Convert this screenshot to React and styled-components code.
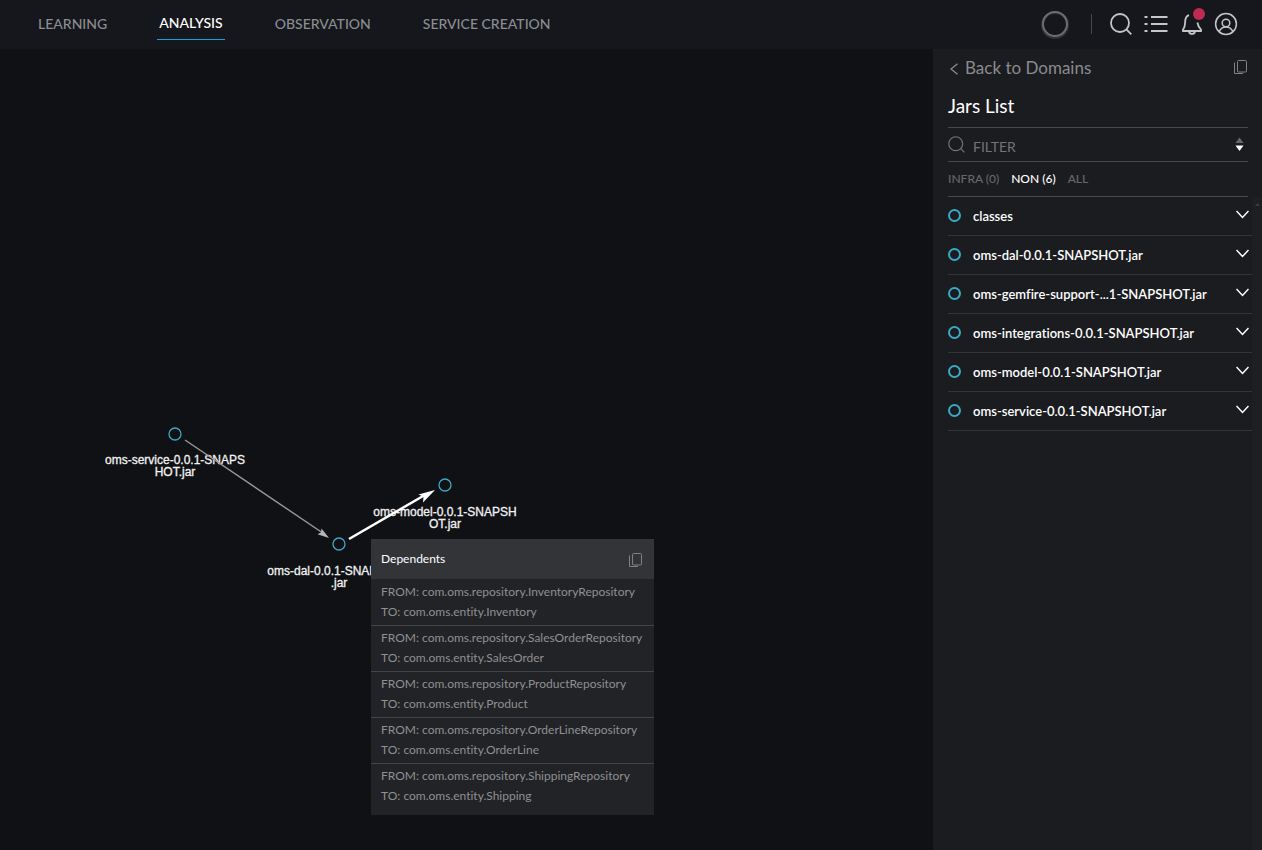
import { useState } from "react";
import styled, { createGlobalStyle } from "styled-components";

const GlobalStyle = createGlobalStyle`
  * {
    box-sizing: border-box;
  }
  body {
    margin: 0;
    background: #101115;
    color: #ffffff;
    font-family: Lato, "Open Sans", sans-serif;
    font-size: 14px;
    font-variant-ligatures: none;
  }
  button {
    padding: 0;
    border: none;
    background: none;
    color: inherit;
    font: inherit;
    cursor: pointer;
  }
  svg {
    display: block;
  }
  h1, h2, ul, p {
    margin: 0;
    padding: 0;
  }
`;

const Page = styled.div`
  display: flex;
  flex-direction: column;
  min-height: 100vh;
`;

const Header = styled.header`
  display: flex;
  justify-content: space-between;
  align-items: center;
  height: 49px;
  padding: 0 24px 2px 36px;
  background: #15171c;
`;

const Nav = styled.nav`
  display: flex;
  gap: 48px;
`;

const NavLink = styled.a`
  padding: 0 2px;
  height: 32px;
  line-height: ${(props) => (props.$active ? "30px" : "32px")};
  font-size: 14px;
  font-weight: 500;
  text-decoration: none;
  color: ${(props) => (props.$active ? "#ffffff" : "#8b8d91")};
  border-bottom: 1px solid ${(props) => (props.$active ? "#12a5cf" : "transparent")};
`;

const Tools = styled.div`
  display: flex;
  align-items: center;
  color: #c4c5c7;
`;

const Divider = styled.span`
  width: 1px;
  height: 20px;
  margin: 0 18px 0 21px;
  background: #45474c;
`;

const ToolButtons = styled.div`
  display: flex;
  gap: 12px;
`;

const Main = styled.main`
  display: flex;
  flex: 1;
`;

const Canvas = styled.section`
  position: relative;
  flex: 1;
  min-width: 0;
  overflow: hidden;
`;

const Graph = styled.svg`
  position: absolute;
  top: 0;
  left: 0;
  width: 100%;
  height: 100%;
  font-family: "Liberation Sans", Arial, sans-serif;
  font-size: 12px;
`;

const Popup = styled.div`
  position: absolute;
  top: 490px;
  left: 371px;
  width: 283px;
  padding-bottom: 6px;
  background: #222326;
`;

const PopupHeader = styled.div`
  display: flex;
  justify-content: space-between;
  align-items: center;
  height: 40px;
  margin-bottom: 1px;
  padding: 0 12px 0 10px;
  background: #333438;
  color: #808185;
  h2 {
    padding-bottom: 2px;
    font-size: 12px;
    font-weight: 400;
    color: #ffffff;
  }
  button {
    padding-top: 2px;
  }
`;

const Dependent = styled.li`
  padding: 2px 10px 3px;
  border-bottom: 1px solid #434448;
  list-style: none;
  font-size: 12px;
  line-height: 20px;
  white-space: nowrap;
  color: #8f9092;
  &:last-child {
    border-bottom: none;
  }
`;

const Sidebar = styled.aside`
  display: flex;
  flex-direction: column;
  width: 329px;
  background: #1b1c1f;
`;

const SidebarTop = styled.div`
  padding: 0 14px 0 15px;
`;

const BackRow = styled.div`
  display: flex;
  justify-content: space-between;
  align-items: center;
  height: 38px;
  padding: 0 1px 2px 0;
  color: #808184;
`;

const BackLink = styled.a`
  display: flex;
  align-items: center;
  gap: 6px;
  padding-left: 2px;
  font-size: 17px;
  text-decoration: none;
  color: #8a8b8e;
  svg {
    margin-top: 4px;
  }
`;

const Title = styled.h1`
  height: 41px;
  line-height: 38px;
  font-size: 19px;
  font-weight: 400;
  border-bottom: 1px solid #47484b;
`;

const FilterRow = styled.div`
  display: flex;
  align-items: center;
  height: 34px;
  padding-right: 4px;
  border-bottom: 1px solid #47484b;
  color: #737477;
`;

const FilterInput = styled.input`
  flex: 1;
  min-width: 0;
  margin-left: 8px;
  padding: 4px 0 0;
  border: none;
  outline: none;
  background: none;
  color: #ffffff;
  font: inherit;
  &::placeholder {
    color: #737477;
    opacity: 1;
  }
`;

const Tabs = styled.div`
  display: flex;
  gap: 12px;
  height: 35px;
  padding-bottom: 2px;
  border-bottom: 1px solid #47484b;
`;

const Tab = styled.button`
  && {
    font-size: 12px;
    font-weight: 500;
    color: ${(props) => (props.$active ? "#ffffff" : "#66676b")};
  }
`;

const ListArea = styled.div`
  display: flex;
  flex: 1;
`;

const JarList = styled.ul`
  flex: 1;
  padding-left: 15px;
  list-style: none;
`;

const Jar = styled.li`
  border-bottom: 1px solid #333437;
`;

const JarButton = styled.button`
  && {
    display: flex;
    align-items: center;
    width: 100%;
    height: 38px;
    padding: 0 3px 2px 0;
  }
  svg {
    margin-bottom: 2px;
  }
`;

const JarName = styled.span`
  flex: 1;
  margin-left: 12px;
  padding-top: 1px;
  font-size: 13px;
  font-weight: 600;
  text-align: left;
  white-space: nowrap;
`;

const Ring = styled.span`
  width: 13px;
  height: 13px;
  border: 2px solid #3ba9c6;
  border-radius: 50%;
`;

const ScrollTrack = styled.div`
  display: flex;
  justify-content: center;
  width: 10px;
  padding-top: 6px;
  background: #1e1f23;
`;

const navItems = ["LEARNING", "ANALYSIS", "OBSERVATION", "SERVICE CREATION"];

const tabs = ["INFRA (0)", "NON (6)", "ALL"];

const jars = [
  "classes",
  "oms-dal-0.0.1-SNAPSHOT.jar",
  "oms-gemfire-support-...1-SNAPSHOT.jar",
  "oms-integrations-0.0.1-SNAPSHOT.jar",
  "oms-model-0.0.1-SNAPSHOT.jar",
  "oms-service-0.0.1-SNAPSHOT.jar",
];

const dependents = [
  ["InventoryRepository", "Inventory"],
  ["SalesOrderRepository", "SalesOrder"],
  ["ProductRepository", "Product"],
  ["OrderLineRepository", "OrderLine"],
  ["ShippingRepository", "Shipping"],
];

const nodes = [
  { x: 175, y: 385, labelY: 415, label: ["oms-service-0.0.1-SNAPS", "HOT.jar"] },
  { x: 339, y: 495, labelY: 526, label: ["oms-dal-0.0.1-SNAPSHOT", ".jar"] },
  { x: 445, y: 436, labelY: 467, label: ["oms-model-0.0.1-SNAPSH", "OT.jar"] },
];

const LoaderIcon = () => (
  <svg width="30" height="30" viewBox="0 0 30 30" fill="none">
    <circle cx="15" cy="16" r="12.5" stroke="#303236" strokeWidth="3" />
    <circle cx="15" cy="15" r="12" stroke="#6b6d71" strokeWidth="2" />
  </svg>
);

const SearchIcon = ({ size, width = 1.8 }) => (
  <svg width={size} height={size} viewBox="0 0 22 22" fill="none" stroke="currentColor" strokeWidth={width}>
    <circle cx="10" cy="10" r="9" />
    <path d="M16.4 16.4L21.3 21.3" />
  </svg>
);

const ListIcon = () => (
  <svg width="24" height="22" viewBox="0 0 24 22" fill="none" stroke="currentColor" strokeWidth="2">
    <path d="M7 4H23.5M7 11H23.5M7 18H23.5M.5 4H3.5M.5 11H3.5M.5 18H3.5" />
  </svg>
);

const BellIcon = () => (
  <svg width="22" height="28" viewBox="0 0 22 28" fill="none" stroke="currentColor" strokeWidth="1.8">
    <path d="M9 5.2C6.2 6 5.4 8.3 5.2 11.3C5 16.3 4.4 18 3 19.600V21H21V19.600C19.4 18 18 16.3 17.4 12.5" />
    <path d="M9 21.4C9.4 24.8 14.6 24.8 15 21.4" />
    <circle cx="19" cy="4" r="6" fill="#bf2a52" stroke="none" />
  </svg>
);

const BellButton = styled.button`
  svg {
    overflow: visible;
  }
`;

const UserIcon = () => (
  <svg width="24" height="24" viewBox="0 0 24 24" fill="none" stroke="currentColor" strokeWidth="1.5">
    <circle cx="12" cy="12" r="10.4" />
    <circle cx="12" cy="11" r="3.8" />
    <path d="M5 19.7C6.3 17 8.8 15 12 15S17.7 17 19 19.7" />
  </svg>
);

const CopyIcon = () => (
  <svg width="13" height="16" viewBox="0 0 13 16" fill="none" stroke="currentColor">
    <rect x="3.5" y="1.5" width="9" height="11.5" rx="1" />
    <path d="M.5 3.5V14.5H9" />
  </svg>
);

const SortIcon = () => (
  <svg width="9" height="16" viewBox="0 0 9 16">
    <path d="M4.5 0.5L8.5 6H.5Z" fill="#66676a" />
    <path d="M.5 8.5H8.5L4.5 14Z" fill="#ffffff" />
  </svg>
);

const ChevronDown = () => (
  <svg width="13" height="9" viewBox="0 0 13 9" fill="none" stroke="#ffffff" strokeWidth="1.5">
    <path d="M.5 1L6.5 7.5L12.5 1" />
  </svg>
);

export default function App() {
  const [activeTab, setActiveTab] = useState("NON (6)");
  const [filter, setFilter] = useState("");

  return (
    <>
      <GlobalStyle />
      <Page>
        <Header>
          <Nav>
            {navItems.map((item) => (
              <NavLink key={item} href="#" $active={item === "ANALYSIS"}>
                {item}
              </NavLink>
            ))}
          </Nav>
          <Tools>
            <LoaderIcon />
            <Divider />
            <ToolButtons>
              <button aria-label="Search">
                <SearchIcon size={22} />
              </button>
              <button aria-label="List">
                <ListIcon />
              </button>
              <BellButton aria-label="Notifications">
                <BellIcon />
              </BellButton>
              <button aria-label="Account">
                <UserIcon />
              </button>
            </ToolButtons>
          </Tools>
        </Header>

        <Main>
          <Canvas>
            <Graph>
              {nodes.map((node) => (
                <g key={node.label[0]}>
                  <circle cx={node.x} cy={node.y} r="6" fill="none" stroke="#3ba9c6" strokeWidth="1.3" />
                  <text textAnchor="middle" fill="#f2f2f2" stroke="#f2f2f2" strokeWidth="0.3">
                    <tspan x={node.x} y={node.labelY}>{node.label[0]}</tspan>
                    <tspan x={node.x} y={node.labelY + 12}>{node.label[1]}</tspan>
                  </text>
                </g>
              ))}
              <path d="M185 391L325 485.5" stroke="#98999b" strokeWidth="1.4" />
              <path d="M329 489L317.5 485.3L321 483.5L321.5 479.5Z" fill="#b5b6b7" />
              <path d="M349 490L424 446.5" stroke="#ffffff" strokeWidth="2.5" />
              <path d="M435 441L418.5 445.5L423.5 447.8L423 453.5Z" fill="#ffffff" />
            </Graph>

            <Popup>
              <PopupHeader>
                <h2>Dependents</h2>
                <button aria-label="Copy dependents">
                  <CopyIcon />
                </button>
              </PopupHeader>
              <ul>
                {dependents.map(([from, to]) => (
                  <Dependent key={from}>
                    <p>FROM: com.oms.repository.{from}</p>
                    <p>TO: com.oms.entity.{to}</p>
                  </Dependent>
                ))}
              </ul>
            </Popup>
          </Canvas>

          <Sidebar>
            <SidebarTop>
              <BackRow>
                <BackLink href="#">
                  <svg width="9" height="12" viewBox="0 0 9 12" fill="none" stroke="currentColor" strokeWidth="1.3">
                    <path d="M7.5 .7L1 6L7.5 11.3" />
                  </svg>
                  Back to Domains
                </BackLink>
                <button aria-label="Copy jars">
                  <CopyIcon />
                </button>
              </BackRow>
              <Title>Jars List</Title>
              <FilterRow>
                <SearchIcon size={17} width={1.5} />
                <FilterInput
                  aria-label="Filter jars"
                  placeholder="FILTER"
                  value={filter}
                  onChange={(e) => setFilter(e.target.value)}
                />
                <button aria-label="Sort">
                  <SortIcon />
                </button>
              </FilterRow>
              <Tabs>
                {tabs.map((tab) => (
                  <Tab key={tab} $active={tab === activeTab} onClick={() => setActiveTab(tab)}>
                    {tab}
                  </Tab>
                ))}
              </Tabs>
            </SidebarTop>
            <ListArea>
              <JarList>
                {jars
                  .filter((jar) => jar.toLowerCase().includes(filter.toLowerCase()))
                  .map((jar) => (
                    <Jar key={jar}>
                      <JarButton>
                        <Ring />
                        <JarName>{jar}</JarName>
                        <ChevronDown />
                      </JarButton>
                    </Jar>
                  ))}
              </JarList>
              <ScrollTrack>
                <svg width="5" height="3" viewBox="0 0 5 3">
                  <path d="M2.5 0L5 3H0Z" fill="#3a3b3f" />
                </svg>
              </ScrollTrack>
            </ListArea>
          </Sidebar>
        </Main>
      </Page>
    </>
  );
}
